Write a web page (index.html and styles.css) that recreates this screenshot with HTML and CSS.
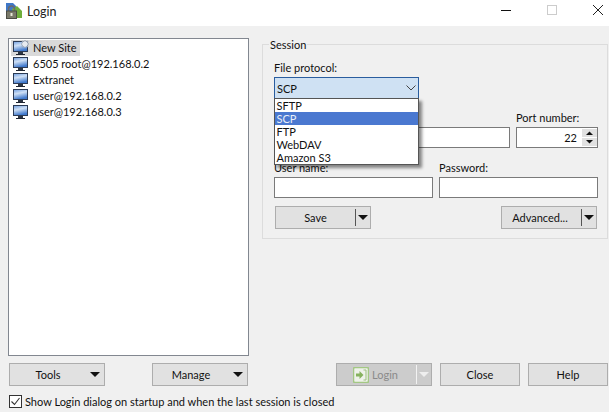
FILE: index.html
```html
<!DOCTYPE html>
<html lang="en">
<head>
<meta charset="utf-8">
<title>Login</title>
<link rel="stylesheet" href="styles.css">
</head>
<body>
<svg class="defs" width="0" height="0" aria-hidden="true">
  <defs>
    <linearGradient id="scr" x1="0" y1="0" x2="0.300" y2="1">
      <stop offset="0" stop-color="#6f9de0"/><stop offset=".45" stop-color="#cfe0f5"/><stop offset="1" stop-color="#3f78cc"/>
    </linearGradient>
    <symbol id="pc" viewBox="0 0 16 16">
      <rect x="0.500" y="1.500" width="14" height="10" fill="url(#scr)" stroke="#2c3b55"/>
      <rect x="5" y="12" width="5" height="2" fill="#2c3442"/>
      <rect x="3" y="14" width="9" height="1" fill="#1e2430"/>
    </symbol>
  </defs>
</svg>
<header class="titlebar">
  <svg class="appicon" width="18" height="18" viewBox="0 0 18 18">
    <path d="M1 1h7l3 3v5H1z" fill="#3f78c8"/>
    <path d="M7 7l5-3 5 5v7H9z" fill="#6fae3c"/>
    <path d="M3.500 9V7a3 3 0 0 1 6 0v2" fill="none" stroke="#6b6b6b" stroke-width="1.500"/>
    <rect x="1.500" y="9" width="10" height="7.500" fill="#7a7a6a" stroke="#4c4c44"/>
    <rect x="5.500" y="11" width="2" height="3" fill="#e8e8d8"/>
  </svg>
  <span class="title">Login</span>
  <div class="winctl">
    <svg width="12" height="12" viewBox="0 0 12 12"><path d="M1 6.500h10" stroke="#111" stroke-width="1"/></svg>
    <svg width="12" height="12" viewBox="0 0 12 12"><rect x="1.500" y="1.500" width="9" height="9" fill="none" stroke="#ccc"/></svg>
    <svg width="12" height="12" viewBox="0 0 12 12"><path d="M1 1l10 10M11 1L1 11" stroke="#222" stroke-width="1"/></svg>
  </div>
</header>
<main class="dialog">
  <div class="top">
    <ul class="tree">
      <li class="node selected">
        <svg class="nodeicon" width="16" height="16" viewBox="0 0 16 16"><use href="#pc"/><path d="M12 0l1 1.500 2-.5-.5 2 1.500 1-1.500 1 .5 2-2-.5-1 1.500-1-1.500-2 .5.500-2-1.500-1 1.500-1-.5-2 2 .5z" fill="#e6eaf0" stroke="#8a97aa" stroke-width=".6"/></svg>
        <span>New Site</span>
      </li>
      <li class="node"><svg class="nodeicon" width="16" height="16"><use href="#pc"/></svg><span>6505 root@192.168.0.2</span></li>
      <li class="node"><svg class="nodeicon" width="16" height="16"><use href="#pc"/></svg><span>Extranet</span></li>
      <li class="node"><svg class="nodeicon" width="16" height="16"><use href="#pc"/></svg><span>user@192.168.0.2</span></li>
      <li class="node"><svg class="nodeicon" width="16" height="16"><use href="#pc"/></svg><span>user@192.168.0.3</span></li>
    </ul>
    <section class="session">
      <span class="legend">Session</span>
      <div class="field protocol">
        <label>File protocol:</label>
        <div class="combo">
          <span>SCP</span>
          <svg width="10" height="6" viewBox="0 0 10 6"><path d="M0.500 0.500L5 5l4.500-4.500" fill="none" stroke="#444"/></svg>
          <ul class="listbox">
            <li>SFTP</li>
            <li class="current">SCP</li>
            <li>FTP</li>
            <li>WebDAV</li>
            <li>Amazon S3</li>
          </ul>
        </div>
      </div>
      <div class="row hostrow">
        <div class="field host"><div class="blanklabel"></div><div class="input"></div></div>
        <div class="field port">
          <label>Port number:</label>
          <div class="input spin">
            <span>22</span>
            <div class="spinbtns">
              <svg width="15" height="8" viewBox="0 0 15 8"><rect width="15" height="8" fill="#e1e1e1"/><path d="M4 6h7L7.500 2.500z" fill="#111"/></svg>
              <svg width="15" height="8" viewBox="0 0 15 8"><rect width="15" height="8" fill="#e1e1e1"/><path d="M4 2h7L7.500 5.500z" fill="#111"/></svg>
            </div>
          </div>
        </div>
      </div>
      <div class="row credrow">
        <div class="field half"><label>User name:</label><div class="input"></div></div>
        <div class="field half"><label>Password:</label><div class="input"></div></div>
      </div>
      <div class="row actions">
        <button class="btn split"><span class="lbl">Save</span><span class="sep"></span><i class="arrow"></i></button>
        <button class="btn split"><span class="lbl adv">Advanced...</span><span class="sep"></span><i class="arrow"></i></button>
      </div>
    </section>
  </div>
  <div class="buttons">
    <div class="leftbtns">
      <button class="btn menu"><span class="lbl">Tools</span><i class="arrow"></i></button>
      <button class="btn menu"><span class="lbl">Manage</span><i class="arrow"></i></button>
    </div>
    <div class="rightbtns">
      <button class="btn split login" disabled>
        <span class="lbl">
          <svg width="16" height="16" viewBox="0 0 16 16"><rect x="0.500" y="0.500" width="15" height="15" rx="1.500" fill="#eef2ea" stroke="#a3c884" stroke-width="1.500"/><path d="M10.500 3h2.500v10h-2.500" fill="none" stroke="#9dbf80"/><path d="M3 6.500h3.500V4l4 4-4 4V9.500H3z" fill="#86b25e"/></svg>
          Login
        </span>
        <span class="sep"></span><i class="arrow"></i>
      </button>
      <button class="btn plain">Close</button>
      <button class="btn plain">Help</button>
    </div>
  </div>
  <label class="check">
    <svg width="13" height="13" viewBox="0 0 13 13"><rect x="0.500" y="0.500" width="12" height="12" fill="#fff" stroke="#333"/><path d="M2.500 6.500l3 3 5-6.500" fill="none" stroke="#333" stroke-width="1.100"/></svg>
    <span>Show Login dialog on startup and when the last session is closed</span>
  </label>
</main>
</body>
</html>
```
FILE: styles.css
```css
* { box-sizing: border-box; }
html, body { margin: 0; padding: 0; }
body {
  width: 609px; height: 412px; overflow: hidden;
  background: #f0f0f0; color: #111;
  font: 11px/13px Lato, "Open Sans", sans-serif;
}
.defs { position: absolute; }
ul { list-style: none; margin: 0; padding: 0; }
label { display: block; }

.titlebar {
  height: 26px; background: #fff;
  display: flex; align-items: center;
  padding: 0 0 4px 5px;
}
.appicon { margin-right: 4px; }
.title { font-size: 12.500px; color: #222; }
.winctl { margin-left: auto; display: flex; gap: 34px; padding-right: 5px; align-self: flex-start; margin-top: 4px; }

.dialog { padding: 12px 1px 0 8px; }
.top { display: flex; gap: 13px; height: 318px; }

.tree {
  width: 241px; height: 318px;
  background: #fff; border: 1px solid #828790;
  padding: 1px 2px;
}
.node { height: 16px; display: flex; align-items: center; gap: 4px; padding-left: 2px; width: fit-content; padding-right: 3px; }
.node span { margin-bottom: 2px; }
.node.selected { background: #d9d9d9; }
.nodeicon { flex: none; }

.session {
  position: relative;
  margin-top: 6px; width: 346px; height: 195px;
  border: 1px solid #dcdcdc;
  padding: 16px 9px 0 11px;
}
.legend { position: absolute; left: 6px; top: -7px; background: #f0f0f0; padding: 0 1px; line-height: 13px; }
.field label { height: 16px; line-height: 13px; }
.blanklabel { height: 16px; }
.row { display: flex; justify-content: space-between; }

.combo {
  position: relative;
  width: 145px; height: 22px;
  background: #cfe1f3; border: 1px solid #2a5d9e;
  display: flex; align-items: center; justify-content: space-between;
  padding: 0 2px;
}
.listbox {
  position: absolute; left: -1px; top: 20px; z-index: 2;
  width: 145px; height: 67px;
  background: #fff; border: 1px solid #555;
  box-shadow: 3px 3px 3px rgba(0,0,0,.45);
}
.listbox li { height: 13px; line-height: 13px; padding-left: 1.500px; }
.listbox li.current { background: #4a78d0; color: #e8eef8; }

.input { height: 21px; background: #fff; border: 1px solid #7a7a7a; }
.hostrow { margin-top: 12px; }
.host { width: 236px; }
.port { width: 82px; }
.spin { display: flex; align-items: center; justify-content: flex-end; gap: 5px; padding-right: 0; }
.spinbtns { display: flex; flex-direction: column; gap: 1px; }
.spinbtns svg { display: block; }
.credrow { margin-top: 13px; }
.half { width: 159px; }
.actions { margin-top: 8px; padding: 0 1px; }

.btn {
  display: flex; align-items: center;
  height: 23px; width: 96px; padding: 0;
  background: #e1e1e1; border: 1px solid #adadad;
  font: inherit; color: #111;
}
.btn .lbl { flex: 1; text-align: center; }
.btn .adv { padding-right: 3px; }
.split .sep { width: 1px; height: 17px; background: #555; margin-right: 2px; }
.arrow {
  width: 0; height: 0; display: block;
  border-left: 5px solid transparent; border-right: 5px solid transparent;
  border-top: 5px solid #111; margin-right: 2px;
}
.menu .arrow { margin-right: 4px; }
.menu .lbl { padding-right: 4px; }

.buttons { display: flex; justify-content: space-between; margin-top: 7px; }
.leftbtns { display: flex; gap: 47px; margin-left: 1px; }
.rightbtns { display: flex; gap: 8px; }
.plain { width: 80px; justify-content: center; }
.login { background: #cccccc; color: #8a8a8a; }
.login .lbl { display: flex; align-items: center; justify-content: center; gap: 3px; padding-right: 2px; }
.login .sep { background: #f2f2f2; height: 19px; }
.login .arrow { border-top-color: #eeeeee; }

.check { display: flex; align-items: center; gap: 3px; margin: 9px 0 0 1px; }
.check svg { flex: none; }
```
